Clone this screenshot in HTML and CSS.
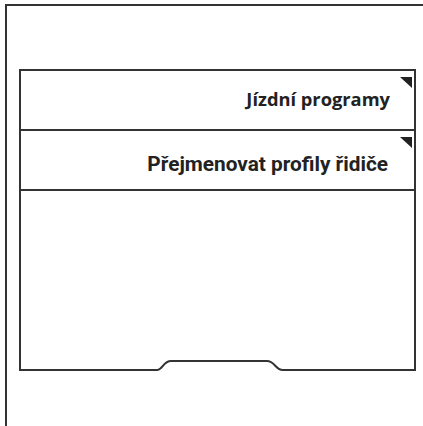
FILE: index.html
```html
<!DOCTYPE html>
<html lang="cs">
<head>
    <meta charset="UTF-8">
    <meta name="viewport" content="width=device-width, initial-scale=1.0">
    <title>Nastavení</title>
    <link rel="stylesheet" href="styles.css">
</head>
<body>
    <div class="frame">
        <div class="panel">
            <div class="row row-first">
                <span class="corner"></span>
                <span class="label label-humanist">Jízdní programy</span>
            </div>
            <div class="row row-second">
                <span class="corner"></span>
                <span class="label label-grotesk">Přejmenovat profily řidiče</span>
            </div>
            <div class="empty"></div>
            <svg class="notch" width="393" height="12" viewBox="0 0 393 12">
                <path d="M-2 11 H136 C142 11 142 2 150 2 H246 C254 2 254 11 262 11 H395" fill="none" stroke="#333" stroke-width="2"/>
            </svg>
        </div>
    </div>
</body>
</html>
```

FILE: styles.css
```css
html, body {
    margin: 0;
    padding: 0;
    background-color: #fff;
}
.frame {
    margin: 4px 0 0 5px;
    width: 418px;
    height: 422px;
    border-top: 2px solid #333;
    border-left: 2px solid #333;
    padding: 63px 0 0 12px;
    box-sizing: border-box;
}
.panel {
    width: 397px;
    border: 2px solid #333;
    border-bottom: none;
    box-sizing: border-box;
    display: flex;
    flex-direction: column;
}
.row {
    position: relative;
    height: 58px;
    border-bottom: 2px solid #333;
    display: flex;
    align-items: center;
    justify-content: flex-end;
    padding-right: 24px;
}
.corner {
    position: absolute;
    top: 6px;
    right: 2px;
    width: 0;
    height: 0;
    border-left: 12px solid transparent;
    border-top: 11px solid #222;
}
.label {
    color: #222;
    white-space: nowrap;
}
.label-humanist {
    font-family: "Open Sans", "DejaVu Sans", sans-serif;
    font-weight: 700;
    font-size: 18.3px;
    margin-top: -3px;
}
.label-grotesk {
    font-family: Roboto, "Liberation Sans", sans-serif;
    font-weight: 700;
    font-size: 20.8px;
    margin-top: 8px;
    padding-right: 2px;
}
.empty {
    height: 168px;
}
.notch {
    display: block;
    overflow: visible;
}
```
